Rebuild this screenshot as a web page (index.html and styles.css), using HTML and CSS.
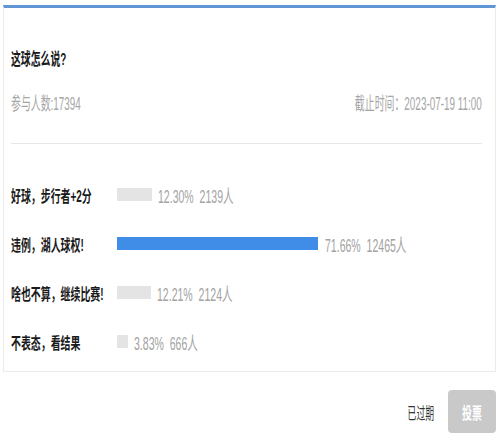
FILE: index.html
```
<!DOCTYPE html>
<html lang="zh-CN">

<head>
	<meta charset="UTF-8" />
	<meta name="viewport" content="width=device-width, initial-scale=1.0" />
	<title>投票</title>
	<link rel="stylesheet" href="styles.css">
</head>

<body>
	<div class="page">
		<div class="card">
			<div class="title"><span class="sq">这球怎么说?</span></div>
			<div class="meta">
				<span class="sq sq-n">参与人数:17394</span>
				<span class="sq sq-n sq-r">截止时间：2023-07-19 11:00</span>
			</div>
			<div class="divider"></div>

			<!-- options -->
			<div class="options">
				<div class="option">
					<div class="label"><span class="sq">好球，步行者+2分</span></div>
					<div class="bar" style="width: 35px"></div>
					<span class="sq result">12.30%&nbsp; 2139人</span>
				</div>
				<div class="option">
					<div class="label"><span class="sq">违例，湖人球权!</span></div>
					<div class="bar bar-top" style="width: 201px"></div>
					<span class="sq result">71.66%&nbsp; 12465人</span>
				</div>
				<div class="option">
					<div class="label"><span class="sq">啥也不算，继续比赛!</span></div>
					<div class="bar" style="width: 34px"></div>
					<span class="sq result">12.21%&nbsp; 2124人</span>
				</div>
				<div class="option">
					<div class="label"><span class="sq">不表态，看结果</span></div>
					<div class="bar" style="width: 11px"></div>
					<span class="sq result">3.83%&nbsp; 666人</span>
				</div>
			</div>
		</div>

		<div class="footer">
			<span class="sq sq-r expired">已过期</span>
			<button class="vote-btn" type="button"><span class="sq sq-c">投票</span></button>
		</div>
	</div>
</body>

</html>
```

FILE: styles.css
```
body {
	margin: 0;
	font-family: "Liberation Sans", "Noto Sans CJK SC", sans-serif;
	background: #ffffff;
}

.page {
	padding: 5px 4px 0 3px;
}

/* condensed text, the screenshot glyphs are narrow */
.sq {
	display: inline-block;
	white-space: nowrap;
	transform: scaleX(0.62);
	transform-origin: left center;
}

.sq-n {
	transform: scaleX(0.55);
}

.sq-r {
	transform-origin: right center;
}

.sq-c {
	transform-origin: center center;
}

.card {
	border: 1px solid #ebebeb;
	border-top: 3px solid #6196d4;
	padding: 41px 13px 5px 7px;
}

.title {
	font-size: 17px;
	font-weight: bold;
	line-height: 22px;
	color: #1a1a1a;
}

.title .sq {
	transform: scaleX(0.58);
}

.meta {
	display: flex;
	justify-content: space-between;
	margin-top: 22px;
	font-size: 18px;
	line-height: 22px;
	color: #a6a6a6;
}

.divider {
	margin-top: 28px;
	border-top: 1px solid #e6e6e6;
}

.options {
	padding-top: 26px;
}

.option {
	display: flex;
	align-items: center;
	height: 49px;
}

.label {
	width: 106px;
	flex: none;
	font-size: 16px;
	font-weight: bold;
	color: #1a1a1a;
	white-space: nowrap;
}

.bar {
	height: 13px;
	background-color: #e4e4e4;
	margin-right: 6px;
	flex: none;
}

.bar-top {
	background-color: #3f8de6;
	margin-right: 7px;
}

.result {
	font-size: 18px;
	color: #a3a3a3;
	transform: scaleX(0.585);
}

.footer {
	display: flex;
	justify-content: flex-end;
	align-items: center;
	gap: 14px;
	margin-top: 18px;
}

.expired {
	font-size: 16px;
	color: #333333;
	transform: scaleX(0.55);
}

.vote-btn {
	width: 48px;
	height: 43px;
	border: none;
	border-radius: 4px;
	background-color: #c9c9c9;
	color: #ffffff;
	font-family: inherit;
	font-size: 16px;
	font-weight: bold;
	padding: 0;
	display: flex;
	justify-content: center;
	align-items: center;
}
```
